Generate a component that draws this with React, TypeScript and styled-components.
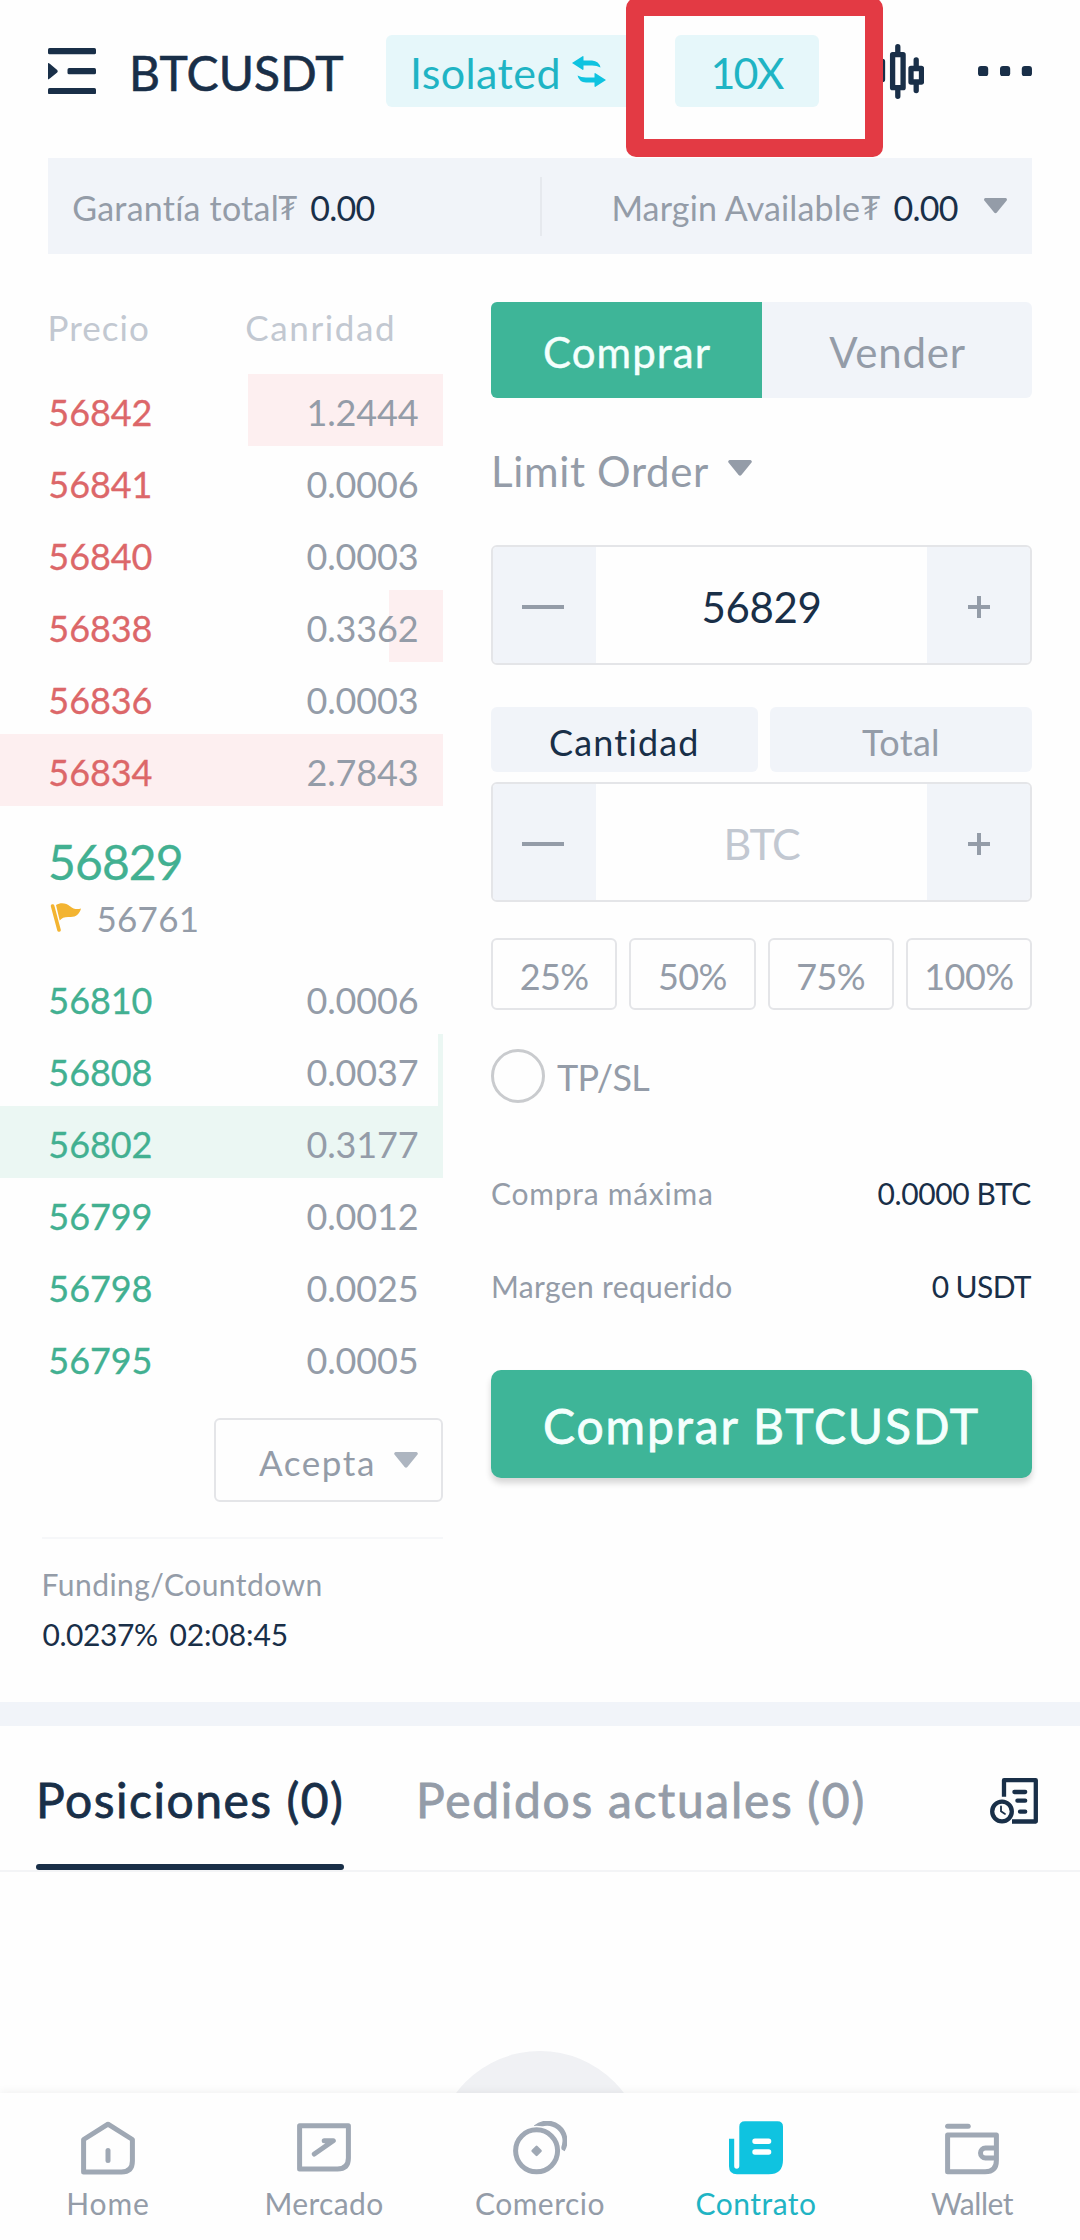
import React from 'react';
import styled, { createGlobalStyle, css } from 'styled-components';

const c = {
  ink: '#192f48',
  gray: '#949ca8',
  faint: '#c2c8d1',
  icon: '#9fa8b4',
  panel: '#f1f4f9',
  line: '#e4e5e8',
  green: '#3eb598',
  greenText: '#42b091',
  red: '#dc6769',
  cyan: '#1fb4c4',
  cyanBright: '#0fc3e0',
  pill: '#e6f7fa',
};

const GlobalStyle = createGlobalStyle`
  * { box-sizing: border-box; }
  html, body { margin: 0; padding: 0; background: #fefefe; }
  body { font-family: Lato, "Open Sans", sans-serif; color: ${c.ink}; }
  svg { display: block; flex: none; }
`;

/* Font size plus tracking, both in px */
const type = (size: number, tracking = 0) => css`
  font-size: ${size}px;
  letter-spacing: ${tracking}px;
  white-space: nowrap;
`;
const semi = css`-webkit-text-stroke: 0.8px currentColor;`;

const Screen = styled.div`
  position: relative;
  display: flex;
  flex-direction: column;
  width: 1080px;
  height: 2240px;
  overflow: hidden;
`;

/* ---------- Header ---------- */
const Header = styled.header`
  display: flex;
  align-items: center;
  height: 158px;
  padding: 35px 48px 51px;
`;
const Pair = styled.h1`
  margin: 0 0 0 33px;
  width: 257px;
  line-height: 72px;
  padding-top: 3px;
  font-weight: 400;
  ${type(48, 0.15)}
  -webkit-text-stroke: 0.6px currentColor;
`;
const MarginMode = styled.button`
  display: flex;
  align-items: center;
  gap: 11px;
  width: 254px;
  height: 72px;
  padding: 0 0 0 24px;
  border: 0;
  border-radius: 6px;
  background: ${c.pill};
  color: ${c.cyan};
  font-family: inherit;
  ${type(43, 0.39)}
`;
const ModeText = styled.span`padding-top: 3px;`;
const Leverage = styled.button`
  width: 144px;
  height: 72px;
  margin-left: 35px;
  padding: 3px 1px 0 0;
  border: 0;
  border-radius: 6px;
  background: ${c.pill};
  color: ${c.cyan};
  font-family: inherit;
  ${type(43, -1.9)}
`;
const CandleSlot = styled.span`margin: 0 54px 0 51px;`;
const Highlight = styled.div`
  position: absolute;
  left: 625.5px;
  top: -2px;
  width: 257px;
  height: 159px;
  border: 18px solid #e33a44;
  border-radius: 10px;
`;

/* ---------- Balance strip ---------- */
const Balance = styled.section`
  display: flex;
  align-items: center;
  height: 96px;
  margin: 0 48px;
  background: ${c.panel};
`;
const BalanceItem = styled.div<{ $start: number; $width: number }>`
  display: flex;
  align-items: center;
  width: ${p => p.$width}px;
  padding: 3px 0 0 ${p => p.$start}px;
  color: ${c.gray};
`;
const BalanceLabel = styled.span<{ $track: number }>`${p => type(34, p.$track)}`;
const Tether = styled.span<{ $shift: number }>`
  margin-left: ${p => p.$shift}px;
  ${type(32)}
`;
const BalanceValue = styled.span`
  margin-left: 12.5px;
  color: ${c.ink};
  ${type(34, -0.7)}
`;
const Divider = styled.span`
  width: 2px;
  height: 59px;
  background: #e6e9ee;
`;
const BalanceCaret = styled.span`margin: -3px 0 0 25px;`;

/* ---------- Trading area ---------- */
const Trade = styled.main`
  display: grid;
  grid-template-columns: 443px 541px;
  column-gap: 48px;
  height: 1448px;
`;
const Column = styled.section`
  display: flex;
  flex-direction: column;
`;

const BookHead = styled.div`
  display: grid;
  grid-template-columns: 197.7px auto;
  height: 120px;
  padding: 37px 0 0 47.6px;
  line-height: 72px;
  color: ${c.faint};
`;
const HeadCell = styled.span<{ $track: number }>`${p => type(35, p.$track)}`;
const Level = styled.div<{ $side: 'ask' | 'bid'; $depth: number }>`
  display: flex;
  justify-content: space-between;
  align-items: center;
  height: 72px;
  padding: 3px 24.5px 0 48.3px;
  --depth: ${p => (p.$side === 'ask' ? '#fdeff0' : '#ebf7f3')};
  background: linear-gradient(var(--depth), var(--depth)) right / ${p => p.$depth}px 100% no-repeat;
  color: ${p => (p.$side === 'ask' ? c.red : c.greenText)};
`;
const Price = styled.span`
  ${type(36, -0.05)}
  -webkit-text-stroke: 0.3px currentColor;
`;
const Amount = styled.span`
  color: ${c.gray};
  ${type(36, -0.14)}
`;
const Middle = styled.div`
  height: 156px;
  padding: 28px 0 0 48px;
`;
const LastPrice = styled.div`
  line-height: 56px;
  color: ${c.greenText};
  ${type(48, -0.9)}
  -webkit-text-stroke: 0.3px currentColor;
`;
const MarkPrice = styled.div`
  display: flex;
  align-items: center;
  gap: 15.5px;
  margin-top: 6px;
  padding-left: 2px;
  line-height: 44px;
  color: ${c.gray};
  ${type(35, 0.25)}
`;
const FlagSlot = styled.span`margin-top: -2px;`;
const DepthSelect = styled.button`
  display: flex;
  align-items: center;
  gap: 18px;
  align-self: flex-end;
  width: 229px;
  height: 84px;
  margin-top: 24px;
  padding: 0 0 0 43px;
  border: 2px solid ${c.line};
  border-radius: 6px;
  background: none;
  color: ${c.gray};
  font-family: inherit;
  ${type(35, 1.59)}
`;
const DepthText = styled.span`padding-top: 4px;`;
const Funding = styled.div`
  margin: 35px 0 0 41.5px;
  padding-top: 27px;
  border-top: 2px solid #f6f7f9;
  line-height: 36px;
  color: ${c.gray};
  ${type(30, 0.45)}
`;
const FundingValues = styled.div`
  display: flex;
  gap: 12px;
  margin: 14px 0 0 1px;
  color: ${c.ink};
`;
const FundingValue = styled.span<{ $track: number }>`${p => type(30, p.$track)}`;

/* ---------- Order form ---------- */
const Sides = styled.div`
  display: grid;
  grid-template-columns: 271px 270px;
  height: 96px;
  margin-top: 48px;
  border-radius: 6px;
  overflow: hidden;
`;
const Side = styled.button<{ $active?: boolean; $track: number }>`
  padding: 4px 0 0 1px;
  border: 0;
  background: ${p => (p.$active ? c.green : c.panel)};
  color: ${p => (p.$active ? '#f4fffd' : c.gray)};
  font-family: inherit;
  ${p => type(42, p.$track)}
  ${p => p.$active && '-webkit-text-stroke: 0.4px currentColor;'}
`;
const OrderType = styled.div`
  display: flex;
  align-items: center;
  gap: 19px;
  margin-top: 42px;
  line-height: 60px;
  color: ${c.gray};
  ${type(42, 0.66)}
`;
const OrderTypeText = styled.span`padding-top: 1px;`;
const CaretLift = styled.span`margin-top: -5px;`;
const StepperBox = styled.div<{ $top: number }>`
  display: grid;
  grid-template-columns: 103px 1fr 103px;
  grid-template-rows: 116px;
  height: 120px;
  margin-top: ${p => p.$top}px;
  border: 2px solid ${c.line};
  border-radius: 6px;
  overflow: hidden;
`;
const StepButton = styled.button<{ $nudge?: number }>`
  display: flex;
  align-items: center;
  justify-content: center;
  padding: 4px ${p => p.$nudge ?? 0}px 0 0;
  border: 0;
  background: ${c.panel};
`;
const StepValue = styled.span<{ $empty?: boolean }>`
  padding-top: 2px;
  text-align: center;
  line-height: 116px;
  color: ${p => (p.$empty ? c.faint : c.ink)};
  ${p => (p.$empty ? type(43, -1.34) : type(42, -0.36))}
`;
const Units = styled.div`
  display: grid;
  grid-template-columns: 266.5px 262px;
  column-gap: 12.5px;
  height: 65px;
  margin-top: 42px;
`;
const Unit = styled.button<{ $active?: boolean; $track: number }>`
  padding: 4px 0 0;
  border: 0;
  border-radius: 6px;
  background: ${c.panel};
  color: ${p => (p.$active ? c.ink : c.gray)};
  font-family: inherit;
  ${p => type(36, p.$track)}
`;
const Percents = styled.div`
  display: grid;
  grid-template-columns: repeat(4, 1fr);
  column-gap: 12px;
  height: 72px;
  margin-top: 36px;
`;
const Percent = styled.button`
  padding: 3px 0 0;
  border: 2px solid ${c.line};
  border-radius: 6px;
  background: none;
  color: ${c.gray};
  font-family: inherit;
  ${type(36, -0.54)}
`;
const TpSl = styled.label`
  display: flex;
  align-items: center;
  gap: 12px;
  height: 54px;
  margin-top: 39px;
  color: ${c.gray};
  ${type(36, -0.71)}
`;
const Radio = styled.span`
  width: 54px;
  height: 54px;
  border: 3px solid #c9cbce;
  border-radius: 50%;
`;
const TpSlText = styled.span`padding-top: 2px;`;
const Info = styled.div<{ $top: number }>`
  display: flex;
  justify-content: space-between;
  margin-top: ${p => p.$top}px;
  line-height: 40px;
  color: ${c.gray};
`;
const InfoLabel = styled.span<{ $track: number }>`${p => type(30, p.$track)}`;
const InfoValue = styled.span<{ $track: number }>`
  margin-right: 1px;
  color: ${c.ink};
  ${p => type(30, p.$track)}
`;
const Submit = styled.button`
  height: 108px;
  margin-top: 64px;
  padding: 3px 0 0;
  border: 0;
  border-radius: 10px;
  background: ${c.green};
  box-shadow: 0 5px 6px rgba(0, 0, 0, 0.16);
  color: #f4fffd;
  font-family: inherit;
  ${type(48, 1.9)}
  ${semi}
`;

/* ---------- Positions ---------- */
const Band = styled.div`
  flex: none;
  height: 24px;
  background: ${c.panel};
`;
const Tabs = styled.nav`
  display: flex;
  flex: none;
  align-items: stretch;
  height: 146px;
  padding: 0 42px 0 36px;
  border-bottom: 2px solid #f3f4f6;
`;
const Tab = styled.div<{ $active?: boolean }>`
  display: flex;
  flex-direction: column;
  width: ${p => (p.$active ? '308px' : 'auto')};
  margin-right: ${p => (p.$active ? '72px' : 'auto')};
  color: ${p => (p.$active ? c.ink : c.gray)};
  ${semi}
`;
const TabText = styled.span<{ $track: number }>`
  height: 138px;
  padding-top: 5px;
  line-height: 138px;
  ${p => type(48, p.$track)}
`;
const Underline = styled.span`
  flex: none;
  height: 6px;
  border-radius: 3px;
  background: ${c.ink};
`;
const HistoryButton = styled.span`
  display: flex;
  align-items: center;
  padding-top: 6px;
`;
const EmptyState = styled.section`
  flex: 1;
  min-height: 0;
  padding-top: 178.7px;
  overflow: hidden;
`;
const EmptyCircle = styled.div`
  width: 210px;
  height: 210px;
  margin: 0 auto;
  border-radius: 50%;
  background: #f0f1f4;
`;

/* ---------- Bottom navigation ---------- */
const BottomNav = styled.nav`
  position: relative;
  display: grid;
  flex: none;
  grid-template-columns: repeat(5, 1fr);
  height: 147px;
  background: #fefefe;
  box-shadow: 0 -2px 8px rgba(0, 0, 0, 0.05);
`;
const NavItem = styled.div<{ $active?: boolean; $track: number }>`
  display: flex;
  flex-direction: column;
  align-items: center;
  gap: 10px;
  padding-top: 27.5px;
  line-height: 36px;
  color: ${p => (p.$active ? c.cyan : c.gray)};
  ${p => type(30, p.$track)}
`;

/* ---------- Icons ---------- */
const Caret = ({ w = 24, h = 16, fill = c.gray }: { w?: number; h?: number; fill?: string }) => (
  <svg width={w} height={h} viewBox="0 0 24 16">
    <path d="M1.500 0h21q2 .8 1 2.600L13.400 15q-1.400 1.600-2.800 0L.5 2.600Q-.5.8 1.500 0z" fill={fill} />
  </svg>
);
const MenuIcon = () => (
  <svg width="48" height="46.4" viewBox="0 0 48 46.4" fill={c.ink}>
    <rect width="48" height="6.3" rx="1.6" />
    <path d="M0 15v16.400q1 0 1.800-.8l7.400-6.200q1.200-1.200 0-2.400L1.800 15.800q-.8-.8-1.800-.8z" />
    <rect x="19.5" y="20.1" width="28.5" height="6.2" rx="1.6" />
    <rect y="40" width="48" height="6.3" rx="1.6" />
  </svg>
);
const swapArrow = 'M0 7 10.500.3q1-.6 1 .6V4.500H20q7 .5 8.500 7-3.500-2-8.500-2h-8.500v3.600q0 1.200-1 .6z';
const SwapIcon = () => (
  <svg width="34" height="31" viewBox="0 0 34 31" fill={c.cyanBright}>
    <path d={swapArrow} />
    <path d={swapArrow} transform="rotate(180 17 15.5)" />
  </svg>
);
const CandlesIcon = () => (
  <svg width="54" height="55" viewBox="0 0 54 55" fill="none" stroke={c.ink} strokeWidth="5.3" strokeLinejoin="round">
    <rect x="2.5" y="17.5" width="10" height="18" />
    <path d="M7.500 8v8M7.500 37v8" strokeLinecap="round" />
    <rect x="22.6" y="10.7" width="10.5" height="33" />
    <path d="M27.800 2.700v7M27.800 45v7.300" strokeLinecap="round" />
    <rect x="41" y="24.5" width="10.5" height="13.5" />
    <path d="M46.200 16v7M46.200 39v7.500" strokeLinecap="round" />
  </svg>
);
const DotsIcon = () => (
  <svg width="54" height="10.4" viewBox="0 0 54 10.4" fill={c.ink}>
    {[0, 22, 43.8].map(x => <rect key={x} x={x} width="10.2" height="10.4" rx="3" />)}
  </svg>
);
const FlagIcon = () => (
  <svg width="31" height="29" viewBox="0 0 31 29">
    <path d="M2.600 3 9 27" stroke="#f3b431" strokeWidth="3.6" strokeLinecap="round" />
    <path d="M6 2C11-1.200 16.500.2 20 3.200c3.500 3 7 3.300 11 2.300-1.500 5.500-5 8.800-11 8.500-5-.3-8 .5-10.300 3.500z" fill="#f3b431" />
  </svg>
);
const MinusIcon = () => (
  <svg width="42" height="4" viewBox="0 0 42 4"><path d="M0 2h42" stroke={c.gray} strokeWidth="4" /></svg>
);
const PlusIcon = () => (
  <svg width="22" height="22" viewBox="0 0 22 22"><path d="M0 11h22M11 0v22" stroke={c.gray} strokeWidth="4" /></svg>
);
const HistoryIcon = () => (
  <svg width="48" height="46" viewBox="0 0 48 46" fill="none" stroke={c.ink} strokeWidth="4.3">
    <path d="M14 18.800V2.200h31.800v41.300H22" strokeLinejoin="round" />
    <path d="M24.400 14h10.800M27.400 22.700h7.800M30 33.700h5.200" strokeLinecap="round" />
    <circle cx="12" cy="33.5" r="9.8" />
    <path d="M11 28.500v4.800l4 2.600" strokeWidth="1.8" strokeLinecap="round" />
  </svg>
);
const NavSvg = ({ children }: { children: React.ReactNode }) => (
  <svg width="54" height="54" viewBox="0 0 54 54" fill="none" stroke={c.icon} strokeWidth="5" strokeLinejoin="round" strokeLinecap="round">
    {children}
  </svg>
);
const HomeIcon = () => (
  <NavSvg>
    <path d="M27 3.200 51.400 18.500V40q0 11-11 11H2.600V18.500z" />
    <path d="M27 29.500v10" />
  </NavSvg>
);
const MarketIcon = () => (
  <NavSvg>
    <path d="M2.600 4.800h48.800V37q0 11-11 11H2.600z" />
    <path d="M17.300 33 36.300 19.800H27.200" />
    <path d="M28 20h8l-5 3.500z" fill={c.icon} strokeWidth="2" />
  </NavSvg>
);
const CommerceIcon = () => (
  <NavSvg>
    <path d="M22.500 6.500A17.800 17.800 0 0 1 49.500 29" strokeLinecap="butt" />
    <circle cx="23.6" cy="29.8" r="21" stroke="#fefefe" strokeWidth="8" />
    <circle cx="23.6" cy="29.8" r="21" />
    <path d="M23.600 25.800l4 4-4 4-4-4z" fill={c.icon} strokeWidth="2.5" />
  </NavSvg>
);
const ContractIcon = () => (
  <svg width="54" height="54" viewBox="0 0 54 54" fill={c.cyanBright}>
    <path d="M16 .3h32.500q5.500 0 5.500 5.500V39q0 14.300-14.300 14.300H8q-8 0-8-8V17.800h5.200V45q0 2.800 2.500 2.800t2.600-2.800V5.800Q10.300.3 16 .3z" />
    <path d="M26 20.200h13.600M26 31h13.600" stroke="#fff" strokeWidth="5.4" strokeLinecap="round" />
  </svg>
);
const WalletIcon = () => (
  <NavSvg>
    <path d="M2.600 5.300h20.600" />
    <path d="M2.600 14h48.800v25.500q0 11.300-11.300 11.300H2.600z" />
    <path d="M50.500 27H40.500a5 5 0 0 0 0 10h10" />
  </NavSvg>
);

/* ---------- Data ---------- */
type Row = [price: string, amount: string, depth: number];
const asks: Row[] = [
  ['56842', '1.2444', 195],
  ['56841', '0.0006', 0],
  ['56840', '0.0003', 0],
  ['56838', '0.3362', 54],
  ['56836', '0.0003', 0],
  ['56834', '2.7843', 443],
];
const bids: Row[] = [
  ['56810', '0.0006', 0],
  ['56808', '0.0037', 5],
  ['56802', '0.3177', 443],
  ['56799', '0.0012', 0],
  ['56798', '0.0025', 0],
  ['56795', '0.0005', 0],
];

const Levels = ({ side, rows }: { side: 'ask' | 'bid'; rows: Row[] }) => (
  <>
    {rows.map(([price, amount, depth]) => (
      <Level key={price} $side={side} $depth={depth}>
        <Price>{price}</Price>
        <Amount>{amount}</Amount>
      </Level>
    ))}
  </>
);

const Stepper = ({ value, placeholder, top }: { value?: string; placeholder?: string; top: number }) => (
  <StepperBox $top={top}>
    <StepButton aria-label="-" $nudge={3}><MinusIcon /></StepButton>
    <StepValue $empty={!value}>{value ?? placeholder}</StepValue>
    <StepButton aria-label="+"><PlusIcon /></StepButton>
  </StepperBox>
);

export default function App() {
  return (
    <Screen>
      <GlobalStyle />
      <Header>
        <MenuIcon />
        <Pair>BTCUSDT</Pair>
        <MarginMode><ModeText>Isolated</ModeText><SwapIcon /></MarginMode>
        <Leverage>10X</Leverage>
        <CandleSlot><CandlesIcon /></CandleSlot>
        <DotsIcon />
        <Highlight />
      </Header>

      <Balance>
        <BalanceItem $start={24.3} $width={492}>
          <BalanceLabel $track={0.22}>Garantía total</BalanceLabel>
          <Tether $shift={-1.5}>₮</Tether>
          <BalanceValue>0.00</BalanceValue>
        </BalanceItem>
        <Divider />
        <BalanceItem $start={69.4} $width={490}>
          <BalanceLabel $track={0.16}>Margin Available</BalanceLabel>
          <Tether $shift={0.5}>₮</Tether>
          <BalanceValue>0.00</BalanceValue>
          <BalanceCaret><Caret w={25} h={15.5} /></BalanceCaret>
        </BalanceItem>
      </Balance>

      <Trade>
        <Column>
          <BookHead>
            <HeadCell $track={1.02}>Precio</HeadCell>
            <HeadCell $track={1.6}>Canridad</HeadCell>
          </BookHead>
          <Levels side="ask" rows={asks} />
          <Middle>
            <LastPrice>56829</LastPrice>
            <MarkPrice><FlagSlot><FlagIcon /></FlagSlot>56761</MarkPrice>
          </Middle>
          <Levels side="bid" rows={bids} />
          <DepthSelect><DepthText>Acepta</DepthText><Caret fill="#adb5c0" /></DepthSelect>
          <Funding>
            Funding/Countdown
            <FundingValues>
              <FundingValue $track={-0.45}>0.0237%</FundingValue>
              <FundingValue $track={-0.1}>02:08:45</FundingValue>
            </FundingValues>
          </Funding>
        </Column>

        <Column>
          <Sides>
            <Side $active $track={1.05}>Comprar</Side>
            <Side $track={0.76}>Vender</Side>
          </Sides>
          <OrderType><OrderTypeText>Limit Order</OrderTypeText><CaretLift><Caret /></CaretLift></OrderType>
          <Stepper top={44} value="56829" />
          <Units>
            <Unit $active $track={1.11}>Cantidad</Unit>
            <Unit $track={0.31}>Total</Unit>
          </Units>
          <Stepper top={10} placeholder="BTC" />
          <Percents>
            {['25%', '50%', '75%', '100%'].map(p => <Percent key={p}>{p}</Percent>)}
          </Percents>
          <TpSl><Radio /><TpSlText>TP/SL</TpSlText></TpSl>
          <Info $top={70}>
            <InfoLabel $track={0.75}>Compra máxima</InfoLabel>
            <InfoValue $track={-0.4}>0.0000 BTC</InfoValue>
          </Info>
          <Info $top={53}>
            <InfoLabel $track={0.36}>Margen requerido</InfoLabel>
            <InfoValue $track={-0.6}>0 USDT</InfoValue>
          </Info>
          <Submit>Comprar BTCUSDT</Submit>
        </Column>
      </Trade>

      <Band />
      <Tabs>
        <Tab $active><TabText $track={1.5}>Posiciones (0)</TabText><Underline /></Tab>
        <Tab><TabText $track={1.68}>Pedidos actuales (0)</TabText></Tab>
        <HistoryButton><HistoryIcon /></HistoryButton>
      </Tabs>
      <EmptyState><EmptyCircle /></EmptyState>

      <BottomNav>
        <NavItem $track={0.89}><HomeIcon />Home</NavItem>
        <NavItem $track={0.35}><MarketIcon />Mercado</NavItem>
        <NavItem $track={0.51}><CommerceIcon />Comercio</NavItem>
        <NavItem $active $track={0.48}><ContractIcon />Contrato</NavItem>
        <NavItem $track={-0.48}><WalletIcon />Wallet</NavItem>
      </BottomNav>
    </Screen>
  );
}
